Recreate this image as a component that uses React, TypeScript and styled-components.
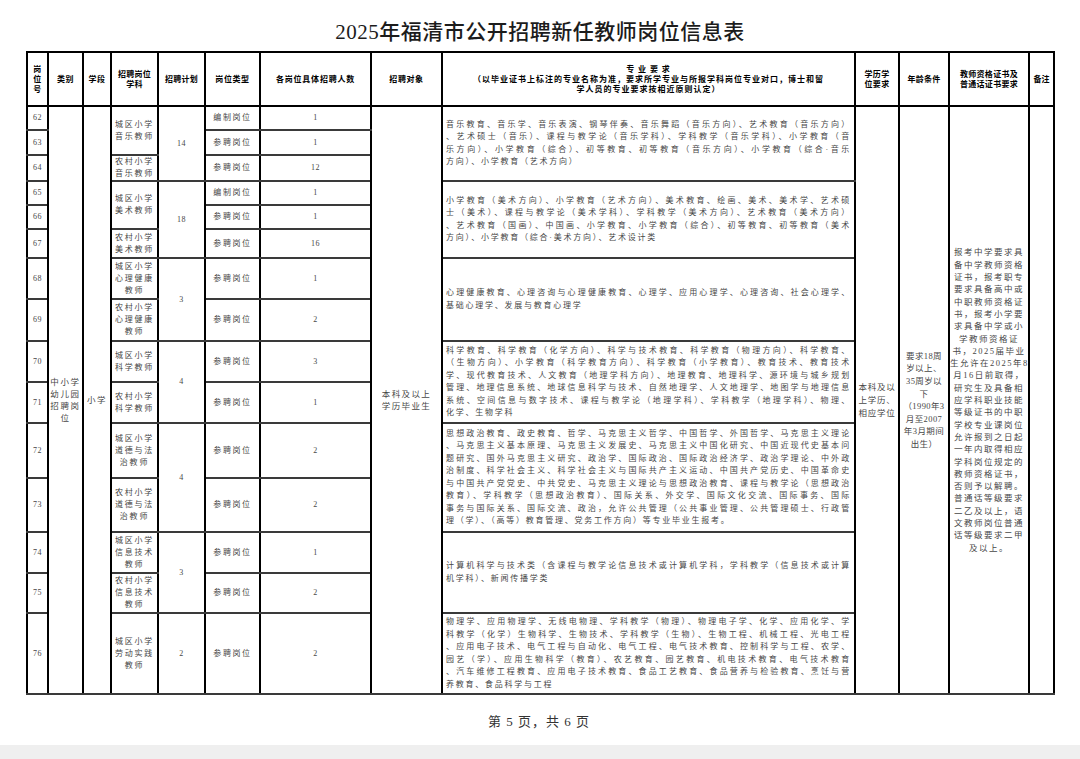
import React from 'react'
import styled, { createGlobalStyle } from 'styled-components'

const GlobalStyle = createGlobalStyle`
  html, body {
    margin: 0;
    padding: 0;
    background: #fff;
  }
  body {
    font-family: "Liberation Serif", "Noto Sans CJK SC", serif;
  }
`

const Page = styled.div`
  width: 1080px;
  height: 759px;
  display: flex;
  flex-direction: column;
  background: #fff;
  overflow: hidden;
`

const Title = styled.h1`
  margin: 0;
  height: 52px;
  box-sizing: border-box;
  padding-top: 8px;
  display: flex;
  align-items: center;
  justify-content: center;
  font-size: 21px;
  font-weight: 500;
  color: #1c1c1c;
  letter-spacing: 0.5px;
`

const Sheet = styled.div`
  padding-left: 26px;
`

const Table = styled.table`
  width: 1027px;
  table-layout: fixed;
  border-collapse: collapse;
`

const HeadRow = styled.tr`
  height: 54px;
`

const Th = styled.th<{ $spacing?: number }>`
  border: 2px solid #000;
  font-family: "Noto Sans CJK SC", sans-serif;
  font-weight: 700;
  font-size: 8px;
  line-height: 10px;
  color: #000;
  padding: 0 1px;
  text-align: center;
  vertical-align: middle;
  letter-spacing: ${p => p.$spacing ?? 0.6}px;
`

const Row = styled.tr<{ $h: number }>`
  height: ${p => p.$h}px;
`

const Td = styled.td<{ $spacing?: number; $size?: number; $lh?: number }>`
  border-left: 2px solid #000;
  border-right: 2px solid #000;
  border-top: 2px solid #3a3a3a;
  border-bottom: 2px solid #3a3a3a;
  font-size: ${p => p.$size ?? 8}px;
  line-height: ${p => p.$lh ?? 12}px;
  color: #474747;
  text-align: center;
  vertical-align: middle;
  padding: 0;
  white-space: nowrap;
  letter-spacing: ${p => p.$spacing ?? 1.7}px;
`

const MajorCell = styled(Td)`
  text-align: left;
  padding: 0 3px 0 3px;
  line-height: 12.5px;
  letter-spacing: 1.75px;
  white-space: normal;
`

const MajorLine = styled.div<{ $last?: boolean }>`
  text-align: justify;
  text-align-last: ${p => (p.$last ? 'left' : 'justify')};
`

const Footer = styled.div`
  height: 51px;
  display: flex;
  align-items: center;
  justify-content: center;
  font-size: 13px;
  color: #333;
  letter-spacing: 1px;
  padding-right: 2px;
`

const Strip = styled.div`
  height: 14px;
  background: #efefef;
`

type Span = { lines: string[]; span: number }
type RowData = {
  no: number
  h: number
  kind: string
  num: number
  subject?: Span
  plan?: { value: number; span: number }
  major?: Span
}

const music = [
  '音乐教育、音乐学、音乐表演、钢琴伴奏、音乐舞蹈（音乐方向）、艺术教育（音乐方向）',
  '、艺术硕士（音乐）、课程与教学论（音乐学科）、学科教学（音乐学科）、小学教育（音',
  '乐方向）、小学教育（综合）、初等教育、初等教育（音乐方向）、小学教育（综合·音乐',
  '方向）、小学教育（艺术方向）',
]
const art = [
  '小学教育（美术方向）、小学教育（艺术方向）、美术教育、绘画、美术、美术学、艺术硕',
  '士（美术）、课程与教学论（美术学科）、学科教学（美术方向）、艺术教育（美术方向）',
  '、艺术教育（国画）、中国画、小学教育、小学教育（综合）、初等教育、初等教育（美术',
  '方向）、小学教育（综合·美术方向）、艺术设计类',
]
const psy = [
  '心理健康教育、心理咨询与心理健康教育、心理学、应用心理学、心理咨询、社会心理学、',
  '基础心理学、发展与教育心理学',
]
const sci = [
  '科学教育、科学教育（化学方向）、科学与技术教育、科学教育（物理方向）、科学教育、',
  '（生物方向）、小学教育（科学教育方向）、科学教育（小学教育）、教育技术、教育技术',
  '学、现代教育技术、人文教育（地理学科方向）、地理教育、地理科学、源环境与城乡规划',
  '管理、地理信息系统、地球信息科学与技术、自然地理学、人文地理学、地图学与地理信息',
  '系统、空间信息与数字技术、课程与教学论（地理学科）、学科教学（地理学科）、物理、',
  '化学、生物学科',
]
const pol = [
  '思想政治教育、政史教育、哲学、马克思主义哲学、中国哲学、外国哲学、马克思主义理论',
  '、马克思主义基本原理、马克思主义发展史、马克思主义中国化研究、中国近现代史基本问',
  '题研究、国外马克思主义研究、政治学、国际政治、国际政治经济学、政治学理论、中外政',
  '治制度、科学社会主义、科学社会主义与国际共产主义运动、中国共产党历史、中国革命史',
  '与中国共产党党史、中共党史、马克思主义理论与思想政治教育、课程与教学论（思想政治',
  '教育）、学科教学（思想政治教育）、国际关系、外交学、国际文化交流、国际事务、国际',
  '事务与国际关系、国际交流、政治，允许公共管理（公共事业管理、公共管理硕士、行政管',
  '理（学）、（高等）教育管理、党务工作方向）等专业毕业生报考。',
]
const it = [
  '计算机科学与技术类（含课程与教学论信息技术或计算机学科，学科教学（信息技术或计算',
  '机学科）、新闻传播学类',
]
const labor = [
  '物理学、应用物理学、无线电物理、学科教学（物理）、物理电子学、化学、应用化学、学',
  '科教学（化学）生物科学、生物技术、学科教学（生物）、生物工程、机械工程、光电工程',
  '、应用电子技术、电气工程与自动化、电气工程、电气技术教育、控制科学与工程、农学、',
  '园艺（学）、应用生物科学（教育）、农艺教育、园艺教育、机电技术教育、电气技术教育',
  '、汽车维修工程教育、应用电子技术教育、食品工艺教育、食品营养与检验教育、烹饪与营',
  '养教育、食品科学与工程',
]

const rows: RowData[] = [
  { no: 62, h: 24, kind: '编制岗位', num: 1, subject: { lines: ['城区小学', '音乐教师'], span: 2 }, plan: { value: 14, span: 3 }, major: { lines: music, span: 3 } },
  { no: 63, h: 25, kind: '参聘岗位', num: 1 },
  { no: 64, h: 26, kind: '参聘岗位', num: 12, subject: { lines: ['农村小学', '音乐教师'], span: 1 } },
  { no: 65, h: 24, kind: '编制岗位', num: 1, subject: { lines: ['城区小学', '美术教师'], span: 2 }, plan: { value: 18, span: 3 }, major: { lines: art, span: 3 } },
  { no: 66, h: 24, kind: '参聘岗位', num: 1 },
  { no: 67, h: 29, kind: '参聘岗位', num: 16, subject: { lines: ['农村小学', '美术教师'], span: 1 } },
  { no: 68, h: 41, kind: '参聘岗位', num: 1, subject: { lines: ['城区小学', '心理健康', '教师'], span: 1 }, plan: { value: 3, span: 2 }, major: { lines: psy, span: 2 } },
  { no: 69, h: 42, kind: '参聘岗位', num: 2, subject: { lines: ['农村小学', '心理健康', '教师'], span: 1 } },
  { no: 70, h: 41, kind: '参聘岗位', num: 3, subject: { lines: ['城区小学', '科学教师'], span: 1 }, plan: { value: 4, span: 2 }, major: { lines: sci, span: 2 } },
  { no: 71, h: 41, kind: '参聘岗位', num: 1, subject: { lines: ['农村小学', '科学教师'], span: 1 } },
  { no: 72, h: 55, kind: '参聘岗位', num: 2, subject: { lines: ['城区小学', '道德与法', '治教师'], span: 1 }, plan: { value: 4, span: 2 }, major: { lines: pol, span: 2 } },
  { no: 73, h: 54, kind: '参聘岗位', num: 2, subject: { lines: ['农村小学', '道德与法', '治教师'], span: 1 } },
  { no: 74, h: 41, kind: '参聘岗位', num: 1, subject: { lines: ['城区小学', '信息技术', '教师'], span: 1 }, plan: { value: 3, span: 2 }, major: { lines: it, span: 2 } },
  { no: 75, h: 40, kind: '参聘岗位', num: 2, subject: { lines: ['农村小学', '信息技术', '教师'], span: 1 } },
  { no: 76, h: 81, kind: '参聘岗位', num: 2, subject: { lines: ['城区小学', '劳动实践', '教师'], span: 1 }, plan: { value: 2, span: 1 }, major: { lines: labor, span: 1 } },
]

const certLines = [
  '报考中学要求具', '备中学教师资格', '证书，报考职专', '要求具备高中或', '中职教师资格证',
  '书，报考小学要', '求具备中学或小', '学教师资格证', '书，2025届毕业', '生允许在2025年8',
  '月16日前取得，', '研究生及具备相', '应学科职业技能', '等级证书的中职', '学校专业课岗位',
  '允许报到之日起', '一年内取得相应', '学科岗位规定的', '教师资格证书，', '否则予以解聘。',
  '普通话等级要求', '二乙及以上，语', '文教师岗位普通', '话等级要求二甲', '及以上。',
]

const ageLines = ['要求18周', '岁以上、', '35周岁以', '下', '（1990年3', '月至2007', '年3月期间', '出生）']

const cols = [21, 35, 28, 47, 47, 55, 111, 71, 413, 44, 50, 80, 25]

function lines(list: string[]) {
  return list.map((l, i) => (
    <React.Fragment key={i}>
      {i > 0 && <br />}
      {l}
    </React.Fragment>
  ))
}

const App: React.FC = () => {
  const total = rows.length
  return (
    <Page lang="zh-CN">
      <GlobalStyle />
      <Title>2025年福清市公开招聘新任教师岗位信息表</Title>
      <Sheet>
        <Table>
          <colgroup>
            {cols.map((w, i) => (
              <col key={i} style={{ width: w }} />
            ))}
          </colgroup>
          <thead>
            <HeadRow>
              <Th>岗<br />位<br />号</Th>
              <Th>类别</Th>
              <Th>学段</Th>
              <Th $spacing={0.3}>招聘岗位<br />学科</Th>
              <Th $spacing={0.3}>招聘计划</Th>
              <Th>岗位类型</Th>
              <Th $spacing={0.8}>各岗位具体招聘人数</Th>
              <Th>招聘对象</Th>
              <Th $spacing={1}>
                专 业 要 求<br />
                （以毕业证书上标注的专业名称为准，要求所学专业与所报学科岗位专业对口，博士和留<br />
                学人员的专业要求按相近原则认定）
              </Th>
              <Th $spacing={0.3}>学历学<br />位要求</Th>
              <Th $spacing={0.3}>年龄条件</Th>
              <Th $spacing={0.3}>教师资格证书及<br />普通话证书要求</Th>
              <Th $spacing={0}>备注</Th>
            </HeadRow>
          </thead>
          <tbody>
            {rows.map((r, i) => (
              <Row key={r.no} $h={r.h}>
                <Td $spacing={0.6}>{r.no}</Td>
                {i === 0 && (
                  <>
                    <Td rowSpan={total} $size={8.5} $spacing={1.6}>{lines(['中小学', '幼儿园', '招聘岗', '位'])}</Td>
                    <Td rowSpan={total} $size={8.5} $spacing={1.6}>小学</Td>
                  </>
                )}
                {r.subject && <Td rowSpan={r.subject.span} $spacing={1.8}>{lines(r.subject.lines)}</Td>}
                {r.plan && <Td rowSpan={r.plan.span} $spacing={0.6}>{r.plan.value}</Td>}
                <Td $spacing={1.6}>{r.kind}</Td>
                <Td $spacing={0.6}>{r.num}</Td>
                {i === 0 && (
                  <Td rowSpan={total} $size={8.5} $spacing={1.4}>{lines(['本科及以上', '学历毕业生'])}</Td>
                )}
                {r.major && (
                  <MajorCell rowSpan={r.major.span}>
                    {r.major.lines.map((l, k) => (
                      <MajorLine key={k} $last={k === r.major!.lines.length - 1}>{l}</MajorLine>
                    ))}
                  </MajorCell>
                )}
                {i === 0 && (
                  <>
                    <Td rowSpan={total} $size={8.5} $lh={13} $spacing={0.8}>{lines(['本科及以', '上学历、', '相应学位'])}</Td>
                    <Td rowSpan={total} $size={8.5} $lh={12.6} $spacing={0.4}>{lines(ageLines)}</Td>
                    <Td rowSpan={total} $size={8.5} $lh={12.3} $spacing={1.5}>{lines(certLines)}</Td>
                    <Td rowSpan={total} />
                  </>
                )}
              </Row>
            ))}
          </tbody>
        </Table>
      </Sheet>
      <Footer>第 5 页，共 6 页</Footer>
      <Strip />
    </Page>
  )
}

export default App
